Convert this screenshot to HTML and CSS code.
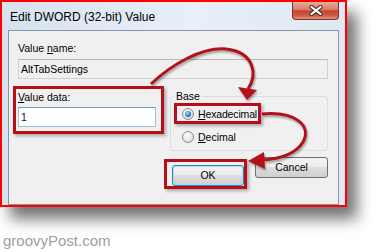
FILE: index.html
```html
<!DOCTYPE html>
<html lang="en">
<head>
    <meta charset="UTF-8">
    <title>Edit DWORD (32-bit) Value</title>
    <link rel="stylesheet" href="styles.css">
</head>
<body>
    <div class="dialog">
        <div class="titlebar">
            <span class="title">Edit DWORD (32-bit) Value</span>
            <div class="close">
                <svg width="14" height="11" viewBox="0 0 14 11">
                    <path d="M2.5 2 L11.5 9 M11.5 2 L2.5 9" stroke="#4a3230" stroke-width="4.2" stroke-linecap="round"/>
                    <path d="M2.5 2 L11.5 9 M11.5 2 L2.5 9" stroke="#ffffff" stroke-width="2.2" stroke-linecap="round"/>
                </svg>
            </div>
        </div>

        <div class="client">
            <div class="label">Value <u>n</u>ame:</div>
            <div class="field readonly">AltTabSettings</div>

            <div class="middle">
                <div class="data mark">
                    <div class="label"><u>V</u>alue data:</div>
                    <div class="field input">1</div>
                </div>

                <fieldset class="base">
                    <legend>Base</legend>
                    <div class="radio hex mark"><span class="dot on"></span><span class="tight"><u>H</u>exadecimal</span></div>
                    <div class="radio dec"><span class="dot"></span><span><u>D</u>ecimal</span></div>
                </fieldset>
            </div>

            <div class="buttons">
                <div class="ok-mark mark"><div class="btn default">OK</div></div>
                <div class="btn cancel">Cancel</div>
            </div>
        </div>
    </div>

    <div class="brand">groovyPost.com</div>

    <!-- red annotation arrows -->
    <svg class="arrows" width="392" height="252" viewBox="0 0 392 252">
        <path d="M151 84 C172 64 202 47 226 49 C254 52 258 74 248 89" fill="none" stroke="#b3101a" stroke-width="3"/>
        <path d="M238 87 L257 90 L247 100 Z" fill="#b3101a"/>
        <path d="M262 114 C296 111 312 126 303 142 C295 155 280 159 262 160" fill="none" stroke="#b3101a" stroke-width="3"/>
        <path d="M264 152 L248 161 L265 169 Z" fill="#b3101a"/>
    </svg>
</body>
</html>
```
FILE: styles.css
```css
body {
    margin: 0;
    width: 392px;
    height: 252px;
    overflow: hidden;
    position: relative;
    background-color: #ffffff;
    font-family: "Liberation Sans", Arial, sans-serif;
    font-size: 10.5px;
    color: #000000;
}

.dialog {
    width: 347px;
    height: 207px;
    box-sizing: border-box;
    border: 2px solid #ff0000;
    padding: 0 6px;
    display: flex;
    flex-direction: column;
    background: linear-gradient(to right, #d6e2f0, #e8eff8 55%, #e0e8f3);
    box-shadow: 10px 12px 14px rgba(0, 0, 0, 0.55);
}

.titlebar {
    height: 28px;
    flex-shrink: 0;
    display: flex;
    align-items: flex-start;
    justify-content: space-between;
    padding-left: 2px;
}

.title {
    font-size: 12px;
    line-height: 14px;
    margin-top: 8px;
}

.close {
    width: 47px;
    height: 18px;
    box-sizing: border-box;
    border: 1px solid #7a3127;
    border-top: none;
    border-radius: 0 0 4px 4px;
    background: linear-gradient(#e9ab9b, #d77c68 45%, #c4452e 52%, #cf5d45 80%, #e39580);
    display: flex;
    align-items: center;
    justify-content: center;
}

.client {
    flex: 1;
    border: 1px solid #8797aa;
    background-color: #f0f0f0;
    padding: 10px 10px 0 9px;
}

.label {
    line-height: 14px;
}

.field {
    height: 20px;
    box-sizing: border-box;
    margin-top: 4px;
    padding: 0 2px;
    line-height: 18px;
    border: 1px solid #d0d0d0;
}

.readonly {
    border-top-color: #b9b9b9;
    background-color: #f0f0f0;
}

.input {
    margin-top: 3px;
    background-color: #ffffff;
    border-color: #9fbfdf;
    border-top-color: #6f97c2;
    color: #1c0b3c;
}

.mark {
    border: 3px solid #b3101a;
    box-shadow: 2px 2px 3px rgba(0, 0, 0, 0.3);
}

.middle {
    display: flex;
    align-items: flex-start;
}

.data {
    width: 151px;
    height: 48px;
    box-sizing: border-box;
    margin: 7px 0 0 -5px;
    padding: 1px 5px 0 2px;
    flex-shrink: 0;
}

.base {
    width: 158px;
    height: 62px;
    box-sizing: border-box;
    margin: 10px 0 0 6px;
    padding: 0;
    min-width: 0;
    border: 1px solid #d5dfe5;
    border-radius: 3px;
}

.base legend {
    margin-left: 3px;
    padding: 0 2px;
    line-height: 14px;
}

.radio {
    display: flex;
    align-items: center;
    gap: 4px;
    height: 15px;
}

.hex {
    width: 87px;
    height: 21px;
    box-sizing: border-box;
    margin-left: 3px;
    padding-left: 5px;
}

.tight {
    letter-spacing: -0.15px;
    white-space: nowrap;
}

.dec {
    margin: 5px 0 0 11px;
}

.dot {
    width: 12px;
    height: 12px;
    flex-shrink: 0;
    box-sizing: border-box;
    border-radius: 50%;
    border: 1px solid #8e8f8f;
    background: radial-gradient(circle at 40% 35%, #ffffff, #e6e6e6 55%, #c9c9c9);
    display: flex;
    align-items: center;
    justify-content: center;
}

.dot.on::after {
    content: "";
    width: 6px;
    height: 6px;
    border-radius: 50%;
    background: radial-gradient(circle at 40% 35%, #a8dcff, #2f7fc8 55%, #12417a);
}

.buttons {
    display: flex;
    justify-content: flex-end;
    align-items: flex-start;
}

.ok-mark {
    margin-top: 8px;
    padding: 3px 0 0 5px;
}

.btn {
    width: 72px;
    height: 21px;
    box-sizing: border-box;
    border: 1px solid #707070;
    border-radius: 3px;
    background: linear-gradient(#f3f3f3, #ebebeb 50%, #dddddd 50%, #cfcfcf);
    line-height: 19px;
    text-align: center;
}

.btn.default {
    border-color: #3c7fb1;
    box-shadow: inset 0 0 0 1px #a8def5;
}

.cancel {
    width: 73px;
    margin: 6px 0 0 8px;
}

.brand {
    margin-top: 25px;
    padding-left: 3px;
    font-size: 15px;
    line-height: 17px;
    color: #a0a0a0;
}

.arrows {
    position: absolute;
    left: 0;
    top: 0;
    pointer-events: none;
    filter: drop-shadow(1px 2px 1px rgba(0, 0, 0, 0.35));
}
```
